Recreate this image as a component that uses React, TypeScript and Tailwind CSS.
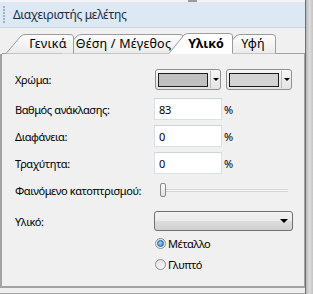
import React from 'react';

function ColorCombo({ swatch }: { swatch: string }) {
  return (
    <div className="flex h-[21px] w-[66px] items-center rounded-[3px] border border-[#8e8f8f] bg-[linear-gradient(#f6f6f6,#e4e4e4)] pl-[2px]">
      <div className="h-[14px] w-[50px] border border-[#1c1c1c]" style={{ backgroundColor: swatch }} />
      <div className="ml-[2px] flex h-[17px] flex-1 items-center justify-center border-l border-[#bcbcbc]">
        <div className="h-0 w-0 border-x-[3px] border-t-[3px] border-x-transparent border-t-black" />
      </div>
    </div>
  );
}

function TextBox({ value }: { value: string }) {
  return (
    <div className="flex items-center">
      <div className="flex h-[22px] w-[68px] items-center border border-[#dbdfe6] border-t-[#cfd3da] bg-white pl-[4px]">
        {value}
      </div>
      <span className="ml-[2px]">%</span>
    </div>
  );
}

function Radio({ checked, label }: { checked?: boolean; label: string }) {
  return (
    <div className="flex items-center">
      <div className="flex h-[11px] w-[11px] items-center justify-center rounded-full border border-[#8f8f8f] bg-[linear-gradient(#e2e2e2,#fafafa)]">
        {checked && (
          <div className="h-[7px] w-[7px] rounded-full border border-[#1d5d9c] bg-[radial-gradient(circle_at_40%_35%,#9fd4ff,#2a7fd0)]" />
        )}
      </div>
      <span className="ml-[2px]">{label}</span>
    </div>
  );
}

function TabStrip() {
  return (
    <div className="relative h-[22px]">
      <svg className="absolute left-0 top-0" width="305" height="22" viewBox="0 0 305 22">
        <defs>
          <linearGradient id="tabg" x1="0" y1="0" x2="0" y2="1">
            <stop offset="0" stopColor="#fdfdfd" />
            <stop offset="1" stopColor="#ebebeb" />
          </linearGradient>
        </defs>
        <line x1="2" y1="21.5" x2="305" y2="21.5" stroke="#a0a0a0" />
        <path d="M221 21.5 L236 4 Q238 2.5 241 2.5 L272 2.5 Q275.5 2.5 275.5 5 L275.5 21.5" fill="url(#tabg)" stroke="#9c9c9c" />
        <path d="M62 21.5 L77 4 Q79 2.5 82 2.5 L180 2.5 Q183 2.5 183 5 L183 21.5" fill="url(#tabg)" stroke="#9c9c9c" />
        <path d="M6 21.5 L21 4 Q23 2.5 26 2.5 L70 2.5 Q73.5 2.5 73.5 5 L73.5 21.5" fill="url(#tabg)" stroke="#9c9c9c" />
        <path d="M169 22 L184 3 Q186 1.5 189 1.5 L229 1.5 Q232.5 1.5 232.5 4 L232.5 22 Z" fill="#ffffff" stroke="none" />
        <path d="M169 21.5 L184 3 Q186 1.5 189 1.5 L229 1.5 Q232.5 1.5 232.5 4 L232.5 21.5" fill="none" stroke="#9c9c9c" />
      </svg>
      <div className="relative flex h-[22px] items-center whitespace-nowrap pl-[23px] pt-[2px] text-[12.5px] tracking-[0.2px]">
        <span className="w-[50px] text-center">Γενικά</span>
        <span className="w-[101px] text-center">Θέση / Μέγεθος</span>
        <span className="w-[64px] text-center font-bold tracking-normal">Υλικό</span>
        <span className="w-[30px] text-center">Υφή</span>
      </div>
    </div>
  );
}

export default function App() {
  return (
    <div className="flex h-[294px] w-[313px] overflow-hidden bg-[#f0f0f0] font-['Noto_Sans','Open_Sans',sans-serif] text-[11px] leading-none tracking-[-0.4px] text-black">
      <div className="flex w-[305px] flex-col">
        {/* title bar */}
        <div className="flex h-[2px] bg-[#f3f3f3]">
          <div className="ml-[188px] h-[2px] w-[9px] bg-[#9a9a9a]" />
        </div>
        <div className="flex h-[26px] items-center border-b border-[#cfd8e2] bg-[#dde8f5]">
          <div className="ml-[3px] flex flex-col gap-[1px]">
            {[0, 1, 2, 3, 4, 5].map((i) => (
              <div key={i} className="h-[2px] w-[2px] bg-[#a8b2be]" />
            ))}
          </div>
          <span className="ml-[8px] text-[12px] tracking-[-0.3px] text-[#1b2b44]">Διαχειριστής μελέτης</span>
        </div>

        <div className="pt-[4px]">
          <TabStrip />
        </div>

        {/* pane */}
        <div className="flex flex-1 flex-col whitespace-nowrap border-b-2 border-l-2 border-r border-[#a3a3a3] pl-[13px] pt-[15px]">
          <div className="flex h-[21px] items-center">
            <span className="w-[140px]">Χρώμα:</span>
            <ColorCombo swatch="#c0c0c0" />
            <div className="ml-[5px]">
              <ColorCombo swatch="#d4d4d4" />
            </div>
          </div>
          <div className="mt-[8px] flex h-[22px] items-center">
            <span className="w-[139px]">Βαθμός ανάκλασης:</span>
            <TextBox value="83" />
          </div>
          <div className="mt-[5px] flex h-[22px] items-center">
            <span className="w-[139px]">Διαφάνεια:</span>
            <TextBox value="0" />
          </div>
          <div className="mt-[5px] flex h-[22px] items-center">
            <span className="w-[139px]">Τραχύτητα:</span>
            <TextBox value="0" />
          </div>
          <div className="mt-[9px] flex h-[14px] items-center">
            <span className="w-[145px]">Φαινόμενο κατοπτρισμού:</span>
            <div className="relative flex h-[14px] w-[128px] items-center">
              <div className="h-[3px] w-full border-y border-[#d6d6d6] bg-[#f8f8f8]" />
              <div className="absolute left-0 top-0 h-[14px] w-[6px] rounded-[2px] border border-[#8a8a8a] bg-[linear-gradient(#fbfbfb,#e0e0e0)]" />
            </div>
          </div>
          <div className="mt-[14px] flex h-[20px] items-center">
            <span className="w-[139px]">Υλικό:</span>
            <div className="flex h-[20px] w-[139px] items-center justify-end rounded-[3px] border border-[#707070] bg-[linear-gradient(#f3f3f3_0%,#ebebeb_50%,#dddddd_50%,#d0d0d0_100%)] pr-[4px]">
              <div className="h-0 w-0 border-x-[4px] border-t-[4px] border-x-transparent border-t-black" />
            </div>
          </div>
          <div className="mt-[4px] flex h-[16px] items-center pl-[140px]">
            <Radio checked label="Μέταλλο" />
          </div>
          <div className="mt-[5px] flex h-[16px] items-center pl-[140px]">
            <Radio label="Γλυπτό" />
          </div>
        </div>
        <div className="h-[6px] border-b border-[#a3a3a3]" />
      </div>
      <div className="w-[8px] border-l border-[#6f6f6f] bg-[linear-gradient(90deg,#b8b8b8,#dcdcdc,#c4c4c4)]" />
    </div>
  );
}
